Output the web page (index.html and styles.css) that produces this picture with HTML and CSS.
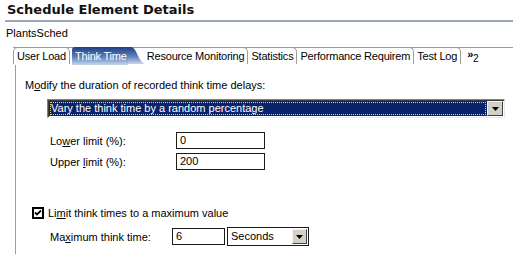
FILE: index.html
```html
<!DOCTYPE html>
<html>
<head>
<meta charset="utf-8">
<link rel="stylesheet" href="styles.css">
</head>
<body>
<div class="title">Schedule Element Details</div>
<div class="name">PlantsSched</div>
<div class="tabs">
  <div class="tab first">User Load</div>
  <div class="tab active"><span class="active-label">Think Time</span><svg class="curve" width="18" height="17" viewBox="0 0 18 17"><defs><linearGradient id="g" x1="0" y1="0" x2="0" y2="1"><stop offset="0" stop-color="#1f3f86"/><stop offset="0.55" stop-color="#5d7fbb"/><stop offset="1" stop-color="#c9d7ec"/></linearGradient></defs><path d="M0 0 H3 C9 0 10 16 18 17 H0 Z" fill="url(#g)"/></svg></div>
  <div class="tab">Resource Monitoring</div>
  <div class="tab">Statistics</div>
  <div class="tab">Performance Requirem</div>
  <div class="tab">Test Log</div>
  <div class="more">&raquo;<sub>2</sub></div>
</div>
<div class="panel">
  <div class="prompt">M<u>o</u>dify the duration of recorded think time delays:</div>
  <div class="combo">
    <div class="combo-text"><span>Vary the think time by a random percentage</span></div>
    <div class="btn"><svg width="7" height="4" viewBox="0 0 7 4"><path d="M0 0H7L3.5 4Z" fill="#000"/></svg></div>
  </div>
  <div class="row first-row">
    <div class="lbl">Lo<u>w</u>er limit (%):</div>
    <div class="input wide">0</div>
  </div>
  <div class="row">
    <div class="lbl">Upper <u>l</u>imit (%):</div>
    <div class="input wide">200</div>
  </div>
  <div class="check-row">
    <svg class="check" width="12" height="12" viewBox="0 0 12 12"><rect x="1" y="1" width="10" height="10" fill="#fff" stroke="#000" stroke-width="2"/><path d="M3 5.5 L5 7.5 L9 3.5" fill="none" stroke="#000" stroke-width="1.8"/></svg>
    <span>Li<u>m</u>it think times to a maximum value</span>
  </div>
  <div class="row max-row">
    <div class="lbl short">Ma<u>x</u>imum think time:</div>
    <div class="input small">6</div>
    <div class="sel">
      <span class="sel-text">Seconds</span>
      <div class="btn"><svg width="7" height="4" viewBox="0 0 7 4"><path d="M0 0H7L3.5 4Z" fill="#000"/></svg></div>
    </div>
  </div>
</div>
</body>
</html>
```
FILE: styles.css
```css
html, body {
  margin: 0;
  padding: 0;
  background: #fff;
  width: 513px;
  height: 254px;
  overflow: hidden;
}
body {
  font-family: "Liberation Sans", Arial, sans-serif;
  font-size: 11px;
  color: #000;
}
u { text-decoration-thickness: 1px; text-underline-offset: 1px; }
.title {
  margin-left: 5px;
  padding-left: 2px;
  height: 20px;
  line-height: 20px;
  font-family: "DejaVu Sans", Verdana, sans-serif;
  font-weight: bold;
  font-size: 13px;
  color: #111;
  border-bottom: 2px solid #98a6b8;
}
.name {
  margin-top: 4px;
  padding-left: 6px;
  line-height: 14px;
  height: 14px;
}
.tabs {
  margin-top: 8px;
  margin-left: 13px;
  height: 16px;
  border-top: 1px solid #9c9c9c;
  display: flex;
  align-items: stretch;
  position: relative;
  top: -1px;
  letter-spacing: -0.2px;
}
.tab {
  padding: 0 3px 0 3px;
  line-height: 16px;
  border-right: 1px solid #9c9c9c;
  border-top-right-radius: 5px;
  margin-top: -1px;
  border-top: 1px solid #9c9c9c;
  white-space: nowrap;
}
.tab.first {
  border-left: 1px solid #9c9c9c;
  border-top-left-radius: 5px;
  padding-left: 3px;
  margin-right: 2px;
}
.tab.active {
  border: none;
  padding: 0;
  display: flex;
  margin-top: -1px;
  height: 18px;
  margin-right: -2px;
}
.active-label {
  color: #fff;
  padding: 1px 1px 0 3px;
  line-height: 16px;
  background: linear-gradient(#1f3f86, #5d7fbb 55%, #c9d7ec);
  border-top-left-radius: 3px;
}
.curve { display: block; }
.more {
  padding-left: 6px;
  font-size: 11px;
  line-height: 12px;
  font-weight: bold;
}
.more sub {
  font-weight: normal;
  font-size: 10px;
  vertical-align: -4px;
}
.panel {
  margin-left: 15px;
  border-left: 1px solid #9c9c9c;
  height: 189px;
  box-sizing: border-box;
  padding: 13px 0 0 9px;
}
.prompt { line-height: 14px; }
.combo {
  margin: 7px 0 0 22px;
  width: 458px;
  height: 19px;
  box-sizing: border-box;
  border: 1px solid #808080;
  border-right-color: #e8e8e8;
  border-bottom-color: #e8e8e8;
  box-shadow: inset 1px 1px 0 #404040;
  display: flex;
  padding: 1px 1px 1px 1px;
  background: #fff;
}
.combo-text {
  flex: 1;
  background: #0a246a;
  color: #fff;
  padding: 1px;
  display: flex;
}
.combo-text span {
  flex: 1;
  border: 1px dotted #e0d890;
  line-height: 11px;
  padding-left: 0;
}
.btn {
  width: 16px;
  background: #d4d0c8;
  box-sizing: border-box;
  border: 1px solid;
  border-color: #f4f4f0 #404040 #404040 #f4f4f0;
  display: flex;
  align-items: center;
  justify-content: center;
}
.row {
  display: flex;
  align-items: center;
  margin-left: 25px;
  margin-top: 4px;
}
.first-row { margin-top: 14px; }
.lbl { width: 126px; }
.lbl.short { width: 122px; }
.input {
  height: 17px;
  box-sizing: border-box;
  border: 1px solid #1c1c1c;
  background: #fff;
  line-height: 15px;
  padding-left: 3px;
}
.wide { width: 89px; }
.small { width: 53px; }
.check-row {
  display: flex;
  align-items: center;
  margin-left: 7px;
  margin-top: 37px;
  gap: 4px;
}
.check { display: block; }
.max-row { margin-top: 8px; }
.sel {
  margin-left: 2px;
  width: 82px;
  height: 19px;
  box-sizing: border-box;
  border: 1px solid #1c1c1c;
  display: flex;
  padding: 1px;
}
.sel-text { flex: 1; line-height: 15px; padding-left: 2px; }
.sel .btn { width: 15px; }
```
